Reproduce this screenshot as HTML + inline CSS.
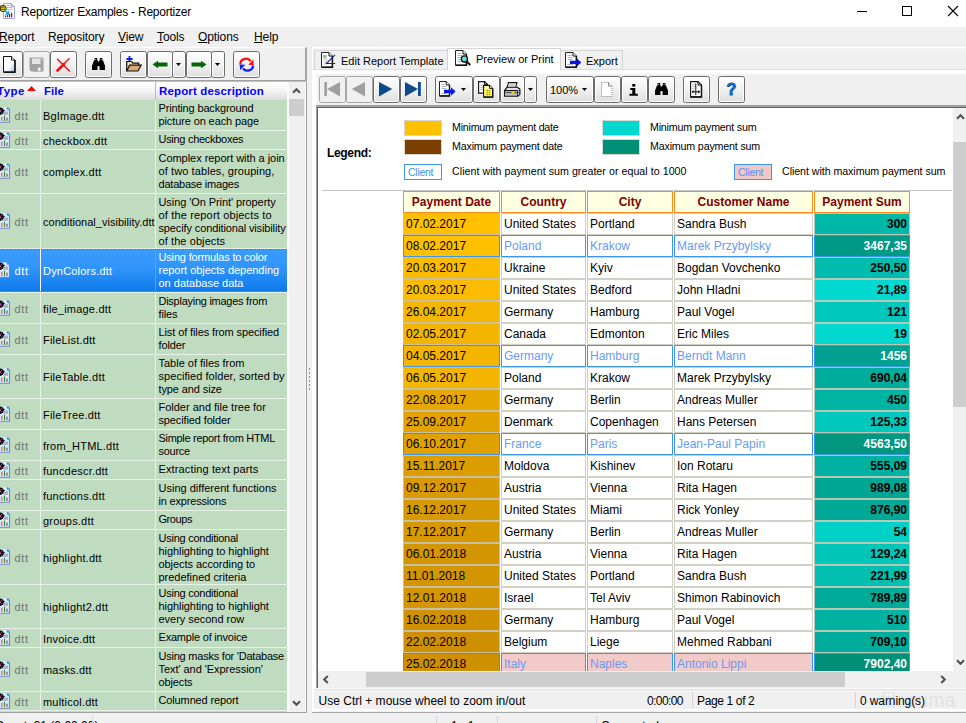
<!DOCTYPE html>
<html><head><meta charset="utf-8"><title>Reportizer Examples - Reportizer</title>
<style>
*{box-sizing:border-box;margin:0;padding:0}
html,body{width:966px;height:723px;overflow:hidden;background:#f0f0f0;font-family:"Liberation Sans",sans-serif;color:#000}
.abs{position:absolute}
#win{position:relative;width:966px;height:723px;overflow:hidden;background:#f0f0f0}
#title{position:absolute;left:0;top:0;width:966px;height:27px;background:#fff}
#title .t{position:absolute;left:21px;top:5px;font-size:12px;letter-spacing:-0.23px;line-height:15px;white-space:nowrap;color:#000}
#menu{position:absolute;left:0;top:27px;width:966px;height:20px;background:#f0f0f0}
#menu span{position:absolute;top:2px;font-size:12px;letter-spacing:-0.1px;line-height:16px;white-space:nowrap}
#menu u{text-decoration:underline;text-underline-offset:1px}
.tb{position:absolute;border:1px solid #6c6c6c;border-radius:2.500px;background:linear-gradient(#ffffff,#f2f2f2 45%,#dfdfdf);box-shadow:inset 0 0 0 1px #fcfcfc}
.dis{background:#f1f1f1;border-color:#a8a8a8;box-shadow:none}
.gtxt{font-size:11.3px;line-height:13px;white-space:nowrap}
#grid{position:absolute;left:0;top:82px;width:287px;height:630px;overflow:hidden;background:#e8f1e8}
.hd{position:absolute;top:0;height:18px;background:linear-gradient(#ffffff,#f4f4f4 50%,#dcdcdc);color:#0000ff;font-weight:bold;font-size:11.5px;line-height:18px;white-space:nowrap;border-right:1px solid #b8b8b8}
.c{position:absolute;background:#c0dcc0;overflow:hidden}
.c div{position:absolute;white-space:nowrap;font-size:11px;letter-spacing:-0.13px;line-height:13px}
.sel{background:linear-gradient(#3c9cfd,#3094fa 45%,#0c79ea)!important;color:#fff}
.rc{position:absolute;height:22px;font-size:12px;line-height:20px;white-space:nowrap;overflow:hidden;border:1px solid #d0d0c4}
.rh{position:absolute;top:191px;height:22px;background:#ffffe1;border:1px solid #ff8c1a;color:#800000;font-weight:bold;font-size:12px;line-height:20px;text-align:center;white-space:nowrap}
.w{background:#fff;border:1px solid #cfcfc4;box-shadow:0 0 0 1px #e4e4d8}
.st{position:absolute;font-size:11.6px;line-height:14px;white-space:nowrap}
</style></head><body><div id="win">

<div id="title"><div class="t">Reportizer Examples - Reportizer</div>
<svg class="abs" style="left:0;top:3px" width="16" height="16" viewBox="0 0 16 16"><path d="M3.500 0.500h8l3 3v12h-11z" fill="#fdfdff" stroke="#98a8d8"/><path d="M11.500 0.500v3h3" fill="#cfe0f8" stroke="#98a8d8"/><path d="M7 2.500h4M7 4.500h5.500M7 6.500h5.500" stroke="#b4b4bc" stroke-width=".9"/><ellipse cx="3" cy="5.500" rx="3.600" ry="3.400" fill="#4a3c00"/><path d="M1 4h4.500M1 5.700h4.500M1 7.300h4.500" stroke="#f0dc28" stroke-width="1"/><path d="M4.500 7l3.500 3.500" stroke="#1e96c8" stroke-width="1.600"/><path d="M9.300 7.500v4.300H5z" fill="#1e96c8"/><rect x="5" y="12.500" width="1.200" height="1.800" fill="#c00010"/><rect x="7" y="12" width="1.200" height="2.300" fill="#c00010"/><rect x="9" y="11" width="1.200" height="3.300" fill="#c00010"/><rect x="11" y="9.800" width="1.200" height="4.500" fill="#c00010"/></svg>
<svg class="abs" style="left:850px;top:0" width="116" height="27" viewBox="0 0 116 27"><path d="M7 11.500h10" stroke="#000" stroke-width="1"/><rect x="52.500" y="6.500" width="9" height="9" fill="none" stroke="#000" stroke-width="1"/><path d="M98 6l10 10M108 6L98 16" stroke="#000" stroke-width="1.100"/></svg>
</div>
<div id="menu">
<span style="left:-1px"><u>R</u>eport</span>
<span style="left:48px">R<u>e</u>pository</span>
<span style="left:118px"><u>V</u>iew</span>
<span style="left:157px"><u>T</u>ools</span>
<span style="left:198px"><u>O</u>ptions</span>
<span style="left:254px"><u>H</u>elp</span>
</div>
<div class="abs" style="left:0;top:47px;width:307px;height:34px;background:#f0f0f0;border-top:1px solid #fff;border-right:2px solid #a4a4a4;border-bottom:1px solid #a0a0a0"></div>
<div class="abs" style="left:0;top:81px;width:307px;height:1px;background:#c0c0c0"></div>
<div class="tb" style="left:-4px;top:51px;width:27px;height:27px"><svg class="abs" style="left:6px;top:4px" width="13" height="17" viewBox="0 0 13 17"><defs><linearGradient id="pg" x1="0" y1="0" x2="1" y2="1"><stop offset=".55" stop-color="#fff"/><stop offset="1" stop-color="#8fc0f0"/></linearGradient></defs><path d="M0.500 0.500h8l3.500 3.500v12h-11.500z" fill="url(#pg)" stroke="#111"/><path d="M8.500 0.500v3.500h3.500" fill="#fff" stroke="#111"/><path d="M12 4v12.200H0.500" fill="none" stroke="#111" stroke-width="1.400"/></svg></div>
<div class="tb dis" style="left:23px;top:51px;width:27px;height:27px"><svg class="abs" style="left:5px;top:5px" width="15" height="15" viewBox="0 0 15 15"><path d="M0.500 0.500h14v14H2L0.500 13z" fill="#a2a2a2"/><rect x="3" y="1.500" width="8.500" height="5.500" fill="#e4e4e4"/><rect x="4" y="9.500" width="8" height="5" fill="#a2a2a2"/><rect x="9" y="10.500" width="2.500" height="3.500" fill="#f4f4f4"/><rect x="12.300" y="1.500" width="1.200" height="1.200" fill="#e4e4e4"/></svg></div>
<div class="tb" style="left:50px;top:51px;width:27px;height:27px"><svg class="abs" style="left:5px;top:6px" width="15" height="14" viewBox="0 0 15 14"><path d="M1.500 1.200L13.500 13" stroke="#f41010" stroke-width="1.500" stroke-linecap="round"/><path d="M13 0.800L8 6" stroke="#f41010" stroke-width="1.400" stroke-linecap="round"/><path d="M8 6L1.500 12.500" stroke="#f41010" stroke-width="2.600" stroke-linecap="round"/></svg></div>
<div class="tb" style="left:85px;top:51px;width:27px;height:27px"><svg class="abs" style="left:6px;top:6px" width="13" height="12" viewBox="0 0 12 11"><path d="M2.400 0h2.400v2.200H2.400zM7.200 0h2.400v2.200H7.200zM1.800 2.200h3.600l.6 1.800V11H0V7zM6.600 2.200h3.600L12 7v4H6V4z" fill="#000"/><rect x="4.800" y="3.800" width="2.400" height="2.800" fill="#000"/><rect x="5" y="7.500" width="2" height="3.500" fill="#f0f0f0"/><rect x="3" y="0.800" width="0.800" height="0.800" fill="#fff"/><rect x="8" y="0.800" width="0.800" height="0.800" fill="#fff"/></svg></div>
<div class="tb" style="left:120px;top:51px;width:27px;height:27px"><svg class="abs" style="left:4px;top:3px" width="18" height="18" viewBox="0 0 18 18"><path d="M4.500 1v6M1.500 4h6" stroke="#0a1af0" stroke-width="1.800"/><path d="M1.700 15.800V6.500h4.800l1.200 1.600h6v2.400" fill="#f4dcb4" stroke="#111" stroke-width="1.200"/><path d="M1.700 16l3-5.800h11.500l-3.200 5.800z" fill="#dcaa78" stroke="#111" stroke-width="1.200"/></svg></div>
<div class="tb" style="left:147px;top:51px;width:26px;height:27px"><svg class="abs" style="left:4px;top:8px" width="16" height="9" viewBox="0 0 15 9"><path d="M0 4.500L5.500 0.800L5.500 2.500H15V6.500H5.500L5.500 8.200z" fill="#066406"/><path d="M0.500 4.500L5.500 1.500" stroke="#0a8a0a" stroke-width=".6"/></svg></div>
<div class="tb" style="left:172px;top:51px;width:14px;height:27px"><svg class="abs" style="left:3px;top:11px" width="5" height="3" viewBox="0 0 5 3"><path d="M0 0h5l-2.500 3z" fill="#000"/></svg></div>
<div class="tb" style="left:186px;top:51px;width:26px;height:27px"><svg class="abs" style="left:4px;top:8px" width="16" height="9" viewBox="0 0 15 9"><g transform="translate(15,0) scale(-1,1)"><path d="M0 4.500L5.500 0.800L5.500 2.500H15V6.500H5.500L5.500 8.200z" fill="#066406"/><path d="M0.500 4.500L5.500 1.500" stroke="#0a8a0a" stroke-width=".6"/></g></svg></div>
<div class="tb" style="left:211px;top:51px;width:14px;height:27px"><svg class="abs" style="left:3px;top:11px" width="5" height="3" viewBox="0 0 5 3"><path d="M0 0h5l-2.500 3z" fill="#000"/></svg></div>
<div class="tb" style="left:233px;top:51px;width:27px;height:27px"><svg class="abs" style="left:4px;top:4px" width="18" height="17" viewBox="0 0 18 17"><path d="M2.500 8.500A5.500 5 0 0 1 12.500 5" fill="none" stroke="#f41010" stroke-width="2.200"/><path d="M10.300 8.800L15.800 9.200L15.300 3.500z" fill="#f41010"/><path d="M15 9.500A5.500 5 0 0 1 5 12.500" fill="none" stroke="#1020f4" stroke-width="2.200"/><path d="M7.200 8.800L1.700 8.400L2.200 14.200z" fill="#1020f4"/></svg></div>
<div id="grid">
<div class="hd" style="left:0;width:41px"><span style="margin-left:-3px;letter-spacing:0.500px">Type</span><svg class="abs" style="left:27px;top:4px" width="9" height="5"><path d="M0 5L4.500 0L9 5z" fill="#f00"/></svg></div>
<div class="hd" style="left:40px;width:116px"><span style="margin-left:4px">File</span></div>
<div class="hd" style="left:156px;width:131px;border-right:none"><span style="margin-left:3px;letter-spacing:0.150px">Report description</span></div>
<div class="c" style="left:0;top:18px;width:40px;height:30px"><svg class="abs" style="left:0;top:7px" width="11" height="16" viewBox="0 0 11 16"><path d="M-1 0.500H7.500L9.500 2.500V15.200H-1z" fill="#dcebff"/><path d="M7.500 0.500L9.500 2.500V15.200H-1" fill="none" stroke="#7484c4" stroke-width="1.100"/><path d="M6.800 0.800h1.200l1 1v0.800H6.800z" fill="#1e90ff"/><rect x="3.300" y="4.400" width="4.700" height="3.400" fill="#aeb3bd"/><path d="M-1 0.800C1.500 0 3.200 1.500 3.400 2.600L5 3.200L3.600 4.600C3.600 6.500 2 8.300 -1 8z" fill="#000"/><circle cx="0.200" cy="4.200" r="0.900" fill="#ff50e0"/><circle cx="1.700" cy="2.600" r="0.500" fill="#9ab09a"/><circle cx="1.700" cy="5.800" r="0.500" fill="#9ab09a"/><rect x="0.900" y="9.600" width="1.700" height="4.200" fill="#ea7a8a"/><rect x="3.900" y="8.600" width="1.200" height="5.500" fill="#14a024"/><rect x="6.200" y="10.600" width="1.600" height="3.200" fill="#b462a4"/></svg><div style="left:14.500px;top:10px;color:#747474;letter-spacing:0.700px">dtt</div></div>
<div class="c" style="left:41px;top:18px;width:114px;height:30px"><div style="left:2px;top:10px;letter-spacing:0.2px">BgImage.dtt</div></div>
<div class="c" style="left:156px;top:18px;width:131px;height:30px"><div style="left:2.500px;top:2px;letter-spacing:-0.158px">Printing background</div><div style="left:2.500px;top:15px;letter-spacing:-0.113px">picture on each page</div></div>
<div class="c" style="left:0;top:49px;width:40px;height:18px"><svg class="abs" style="left:0;top:1px" width="11" height="16" viewBox="0 0 11 16"><path d="M-1 0.500H7.500L9.500 2.500V15.200H-1z" fill="#dcebff"/><path d="M7.500 0.500L9.500 2.500V15.200H-1" fill="none" stroke="#7484c4" stroke-width="1.100"/><path d="M6.800 0.800h1.200l1 1v0.800H6.800z" fill="#1e90ff"/><rect x="3.300" y="4.400" width="4.700" height="3.400" fill="#aeb3bd"/><path d="M-1 0.800C1.500 0 3.200 1.500 3.400 2.600L5 3.200L3.600 4.600C3.600 6.500 2 8.300 -1 8z" fill="#000"/><circle cx="0.200" cy="4.200" r="0.900" fill="#ff50e0"/><circle cx="1.700" cy="2.600" r="0.500" fill="#9ab09a"/><circle cx="1.700" cy="5.800" r="0.500" fill="#9ab09a"/><rect x="0.900" y="9.600" width="1.700" height="4.200" fill="#ea7a8a"/><rect x="3.900" y="8.600" width="1.200" height="5.500" fill="#14a024"/><rect x="6.200" y="10.600" width="1.600" height="3.200" fill="#b462a4"/></svg><div style="left:14.500px;top:4px;color:#747474;letter-spacing:0.700px">dtt</div></div>
<div class="c" style="left:41px;top:49px;width:114px;height:18px"><div style="left:2px;top:4px;letter-spacing:0.2px">checkbox.dtt</div></div>
<div class="c" style="left:156px;top:49px;width:131px;height:18px"><div style="left:2.500px;top:2px;letter-spacing:-0.285px">Using checkboxes</div></div>
<div class="c" style="left:0;top:68px;width:40px;height:43px"><svg class="abs" style="left:0;top:13px" width="11" height="16" viewBox="0 0 11 16"><path d="M-1 0.500H7.500L9.500 2.500V15.200H-1z" fill="#dcebff"/><path d="M7.500 0.500L9.500 2.500V15.200H-1" fill="none" stroke="#7484c4" stroke-width="1.100"/><path d="M6.800 0.800h1.200l1 1v0.800H6.800z" fill="#1e90ff"/><rect x="3.300" y="4.400" width="4.700" height="3.400" fill="#aeb3bd"/><path d="M-1 0.800C1.500 0 3.200 1.500 3.400 2.600L5 3.200L3.600 4.600C3.600 6.500 2 8.300 -1 8z" fill="#000"/><circle cx="0.200" cy="4.200" r="0.900" fill="#ff50e0"/><circle cx="1.700" cy="2.600" r="0.500" fill="#9ab09a"/><circle cx="1.700" cy="5.800" r="0.500" fill="#9ab09a"/><rect x="0.900" y="9.600" width="1.700" height="4.200" fill="#ea7a8a"/><rect x="3.900" y="8.600" width="1.200" height="5.500" fill="#14a024"/><rect x="6.200" y="10.600" width="1.600" height="3.200" fill="#b462a4"/></svg><div style="left:14.500px;top:16px;color:#747474;letter-spacing:0.700px">dtt</div></div>
<div class="c" style="left:41px;top:68px;width:114px;height:43px"><div style="left:2px;top:16px;letter-spacing:0.2px">complex.dtt</div></div>
<div class="c" style="left:156px;top:68px;width:131px;height:43px"><div style="left:2.500px;top:2px;letter-spacing:-0.039px">Complex report with a join</div><div style="left:2.500px;top:15px;letter-spacing:0.093px">of two tables, grouping,</div><div style="left:2.500px;top:28px;letter-spacing:-0.22px">database images</div></div>
<div class="c" style="left:0;top:112px;width:40px;height:54px"><svg class="abs" style="left:0;top:19px" width="11" height="16" viewBox="0 0 11 16"><path d="M-1 0.500H7.500L9.500 2.500V15.200H-1z" fill="#dcebff"/><path d="M7.500 0.500L9.500 2.500V15.200H-1" fill="none" stroke="#7484c4" stroke-width="1.100"/><path d="M6.800 0.800h1.200l1 1v0.800H6.800z" fill="#1e90ff"/><rect x="3.300" y="4.400" width="4.700" height="3.400" fill="#aeb3bd"/><path d="M-1 0.800C1.500 0 3.200 1.500 3.400 2.600L5 3.200L3.600 4.600C3.600 6.500 2 8.300 -1 8z" fill="#000"/><circle cx="0.200" cy="4.200" r="0.900" fill="#ff50e0"/><circle cx="1.700" cy="2.600" r="0.500" fill="#9ab09a"/><circle cx="1.700" cy="5.800" r="0.500" fill="#9ab09a"/><rect x="0.900" y="9.600" width="1.700" height="4.200" fill="#ea7a8a"/><rect x="3.900" y="8.600" width="1.200" height="5.500" fill="#14a024"/><rect x="6.200" y="10.600" width="1.600" height="3.200" fill="#b462a4"/></svg><div style="left:14.500px;top:22px;color:#747474;letter-spacing:0.700px">dtt</div></div>
<div class="c" style="left:41px;top:112px;width:114px;height:54px"><div style="left:2px;top:22px;letter-spacing:0.02px">conditional_visibility.dtt</div></div>
<div class="c" style="left:156px;top:112px;width:131px;height:54px"><div style="left:2.500px;top:2px;letter-spacing:-0.081px">Using 'On Print' property</div><div style="left:2.500px;top:15px;letter-spacing:0.163px">of the report objects to</div><div style="left:2.500px;top:28px;letter-spacing:-0.126px">specify conditional visibility</div><div style="left:2.500px;top:41px;letter-spacing:0.089px">of the objects</div></div>
<div class="c sel" style="left:0;top:167px;width:40px;height:43px"><svg class="abs" style="left:0;top:13px" width="11" height="16" viewBox="0 0 11 16"><path d="M-1 0.500H7.500L9.500 2.500V15.200H-1z" fill="#dcebff"/><path d="M7.500 0.500L9.500 2.500V15.200H-1" fill="none" stroke="#7484c4" stroke-width="1.100"/><path d="M6.800 0.800h1.200l1 1v0.800H6.800z" fill="#1e90ff"/><rect x="3.300" y="4.400" width="4.700" height="3.400" fill="#aeb3bd"/><path d="M-1 0.800C1.500 0 3.200 1.500 3.400 2.600L5 3.200L3.600 4.600C3.600 6.500 2 8.300 -1 8z" fill="#000"/><circle cx="0.200" cy="4.200" r="0.900" fill="#ff50e0"/><circle cx="1.700" cy="2.600" r="0.500" fill="#9ab09a"/><circle cx="1.700" cy="5.800" r="0.500" fill="#9ab09a"/><rect x="0.900" y="9.600" width="1.700" height="4.200" fill="#ea7a8a"/><rect x="3.900" y="8.600" width="1.200" height="5.500" fill="#14a024"/><rect x="6.200" y="10.600" width="1.600" height="3.200" fill="#b462a4"/></svg><div style="left:14.500px;top:16px;color:#fff;letter-spacing:0.700px">dtt</div></div>
<div class="c sel" style="left:41px;top:167px;width:114px;height:43px"><div style="left:2px;top:16px;letter-spacing:0.2px">DynColors.dtt</div></div>
<div class="c sel" style="left:156px;top:167px;width:131px;height:43px"><div style="left:2.500px;top:2px;letter-spacing:-0.168px">Using formulas to color</div><div style="left:2.500px;top:15px;letter-spacing:-0.021px">report objects depending</div><div style="left:2.500px;top:28px;letter-spacing:-0.002px">on database data</div></div>
<div class="abs" style="left:0;top:167px;width:287px;height:1px;background:repeating-linear-gradient(90deg,#d88a3c 0 1px,#2a6fc0 1px 2px)"></div>
<div class="abs" style="left:0;top:209px;width:287px;height:1px;background:repeating-linear-gradient(90deg,#d88a3c 0 1px,#2a6fc0 1px 2px)"></div>
<div class="abs" style="left:40px;top:167px;width:1px;height:42px;background:#fff"></div>
<div class="abs" style="left:155px;top:168px;width:1px;height:41px;background:#4ea4fb"></div>
<div class="c" style="left:0;top:211px;width:40px;height:30px"><svg class="abs" style="left:0;top:7px" width="11" height="16" viewBox="0 0 11 16"><path d="M-1 0.500H7.500L9.500 2.500V15.200H-1z" fill="#dcebff"/><path d="M7.500 0.500L9.500 2.500V15.200H-1" fill="none" stroke="#7484c4" stroke-width="1.100"/><path d="M6.800 0.800h1.200l1 1v0.800H6.800z" fill="#1e90ff"/><rect x="3.300" y="4.400" width="4.700" height="3.400" fill="#aeb3bd"/><path d="M-1 0.800C1.500 0 3.200 1.500 3.400 2.600L5 3.200L3.600 4.600C3.600 6.500 2 8.300 -1 8z" fill="#000"/><circle cx="0.200" cy="4.200" r="0.900" fill="#ff50e0"/><circle cx="1.700" cy="2.600" r="0.500" fill="#9ab09a"/><circle cx="1.700" cy="5.800" r="0.500" fill="#9ab09a"/><rect x="0.900" y="9.600" width="1.700" height="4.200" fill="#ea7a8a"/><rect x="3.900" y="8.600" width="1.200" height="5.500" fill="#14a024"/><rect x="6.200" y="10.600" width="1.600" height="3.200" fill="#b462a4"/></svg><div style="left:14.500px;top:10px;color:#747474;letter-spacing:0.700px">dtt</div></div>
<div class="c" style="left:41px;top:211px;width:114px;height:30px"><div style="left:2px;top:10px;letter-spacing:0.2px">file_image.dtt</div></div>
<div class="c" style="left:156px;top:211px;width:131px;height:30px"><div style="left:2.500px;top:2px;letter-spacing:-0.263px">Displaying images from</div><div style="left:2.500px;top:15px;letter-spacing:-0.166px">files</div></div>
<div class="c" style="left:0;top:242px;width:40px;height:30px"><svg class="abs" style="left:0;top:7px" width="11" height="16" viewBox="0 0 11 16"><path d="M-1 0.500H7.500L9.500 2.500V15.200H-1z" fill="#dcebff"/><path d="M7.500 0.500L9.500 2.500V15.200H-1" fill="none" stroke="#7484c4" stroke-width="1.100"/><path d="M6.800 0.800h1.200l1 1v0.800H6.800z" fill="#1e90ff"/><rect x="3.300" y="4.400" width="4.700" height="3.400" fill="#aeb3bd"/><path d="M-1 0.800C1.500 0 3.200 1.500 3.400 2.600L5 3.200L3.600 4.600C3.600 6.500 2 8.300 -1 8z" fill="#000"/><circle cx="0.200" cy="4.200" r="0.900" fill="#ff50e0"/><circle cx="1.700" cy="2.600" r="0.500" fill="#9ab09a"/><circle cx="1.700" cy="5.800" r="0.500" fill="#9ab09a"/><rect x="0.900" y="9.600" width="1.700" height="4.200" fill="#ea7a8a"/><rect x="3.900" y="8.600" width="1.200" height="5.500" fill="#14a024"/><rect x="6.200" y="10.600" width="1.600" height="3.200" fill="#b462a4"/></svg><div style="left:14.500px;top:10px;color:#747474;letter-spacing:0.700px">dtt</div></div>
<div class="c" style="left:41px;top:242px;width:114px;height:30px"><div style="left:2px;top:10px;letter-spacing:0.2px">FileList.dtt</div></div>
<div class="c" style="left:156px;top:242px;width:131px;height:30px"><div style="left:2.500px;top:2px;letter-spacing:-0.107px">List of files from specified</div><div style="left:2.500px;top:15px;letter-spacing:-0.13px">folder</div></div>
<div class="c" style="left:0;top:273px;width:40px;height:43px"><svg class="abs" style="left:0;top:13px" width="11" height="16" viewBox="0 0 11 16"><path d="M-1 0.500H7.500L9.500 2.500V15.200H-1z" fill="#dcebff"/><path d="M7.500 0.500L9.500 2.500V15.200H-1" fill="none" stroke="#7484c4" stroke-width="1.100"/><path d="M6.800 0.800h1.200l1 1v0.800H6.800z" fill="#1e90ff"/><rect x="3.300" y="4.400" width="4.700" height="3.400" fill="#aeb3bd"/><path d="M-1 0.800C1.500 0 3.200 1.500 3.400 2.600L5 3.200L3.600 4.600C3.600 6.500 2 8.300 -1 8z" fill="#000"/><circle cx="0.200" cy="4.200" r="0.900" fill="#ff50e0"/><circle cx="1.700" cy="2.600" r="0.500" fill="#9ab09a"/><circle cx="1.700" cy="5.800" r="0.500" fill="#9ab09a"/><rect x="0.900" y="9.600" width="1.700" height="4.200" fill="#ea7a8a"/><rect x="3.900" y="8.600" width="1.200" height="5.500" fill="#14a024"/><rect x="6.200" y="10.600" width="1.600" height="3.200" fill="#b462a4"/></svg><div style="left:14.500px;top:16px;color:#747474;letter-spacing:0.700px">dtt</div></div>
<div class="c" style="left:41px;top:273px;width:114px;height:43px"><div style="left:2px;top:16px;letter-spacing:0.2px">FileTable.dtt</div></div>
<div class="c" style="left:156px;top:273px;width:131px;height:43px"><div style="left:2.500px;top:2px;letter-spacing:-0.011px">Table of files from</div><div style="left:2.500px;top:15px;letter-spacing:0.052px">specified folder, sorted by</div><div style="left:2.500px;top:28px;letter-spacing:-0.111px">type and size</div></div>
<div class="c" style="left:0;top:317px;width:40px;height:30px"><svg class="abs" style="left:0;top:7px" width="11" height="16" viewBox="0 0 11 16"><path d="M-1 0.500H7.500L9.500 2.500V15.200H-1z" fill="#dcebff"/><path d="M7.500 0.500L9.500 2.500V15.200H-1" fill="none" stroke="#7484c4" stroke-width="1.100"/><path d="M6.800 0.800h1.200l1 1v0.800H6.800z" fill="#1e90ff"/><rect x="3.300" y="4.400" width="4.700" height="3.400" fill="#aeb3bd"/><path d="M-1 0.800C1.500 0 3.200 1.500 3.400 2.600L5 3.200L3.600 4.600C3.600 6.500 2 8.300 -1 8z" fill="#000"/><circle cx="0.200" cy="4.200" r="0.900" fill="#ff50e0"/><circle cx="1.700" cy="2.600" r="0.500" fill="#9ab09a"/><circle cx="1.700" cy="5.800" r="0.500" fill="#9ab09a"/><rect x="0.900" y="9.600" width="1.700" height="4.200" fill="#ea7a8a"/><rect x="3.900" y="8.600" width="1.200" height="5.500" fill="#14a024"/><rect x="6.200" y="10.600" width="1.600" height="3.200" fill="#b462a4"/></svg><div style="left:14.500px;top:10px;color:#747474;letter-spacing:0.700px">dtt</div></div>
<div class="c" style="left:41px;top:317px;width:114px;height:30px"><div style="left:2px;top:10px;letter-spacing:0.2px">FileTree.dtt</div></div>
<div class="c" style="left:156px;top:317px;width:131px;height:30px"><div style="left:2.500px;top:2px;letter-spacing:-0.01px">Folder and file tree for</div><div style="left:2.500px;top:15px;letter-spacing:-0.127px">specified folder</div></div>
<div class="c" style="left:0;top:348px;width:40px;height:30px"><svg class="abs" style="left:0;top:7px" width="11" height="16" viewBox="0 0 11 16"><path d="M-1 0.500H7.500L9.500 2.500V15.200H-1z" fill="#dcebff"/><path d="M7.500 0.500L9.500 2.500V15.200H-1" fill="none" stroke="#7484c4" stroke-width="1.100"/><path d="M6.800 0.800h1.200l1 1v0.800H6.800z" fill="#1e90ff"/><rect x="3.300" y="4.400" width="4.700" height="3.400" fill="#aeb3bd"/><path d="M-1 0.800C1.500 0 3.200 1.500 3.400 2.600L5 3.200L3.600 4.600C3.600 6.500 2 8.300 -1 8z" fill="#000"/><circle cx="0.200" cy="4.200" r="0.900" fill="#ff50e0"/><circle cx="1.700" cy="2.600" r="0.500" fill="#9ab09a"/><circle cx="1.700" cy="5.800" r="0.500" fill="#9ab09a"/><rect x="0.900" y="9.600" width="1.700" height="4.200" fill="#ea7a8a"/><rect x="3.900" y="8.600" width="1.200" height="5.500" fill="#14a024"/><rect x="6.200" y="10.600" width="1.600" height="3.200" fill="#b462a4"/></svg><div style="left:14.500px;top:10px;color:#747474;letter-spacing:0.700px">dtt</div></div>
<div class="c" style="left:41px;top:348px;width:114px;height:30px"><div style="left:2px;top:10px;letter-spacing:0.2px">from_HTML.dtt</div></div>
<div class="c" style="left:156px;top:348px;width:131px;height:30px"><div style="left:2.500px;top:2px;letter-spacing:-0.304px">Simple report from HTML</div><div style="left:2.500px;top:15px;letter-spacing:-0.266px">source</div></div>
<div class="c" style="left:0;top:379px;width:40px;height:18px"><svg class="abs" style="left:0;top:1px" width="11" height="16" viewBox="0 0 11 16"><path d="M-1 0.500H7.500L9.500 2.500V15.200H-1z" fill="#dcebff"/><path d="M7.500 0.500L9.500 2.500V15.200H-1" fill="none" stroke="#7484c4" stroke-width="1.100"/><path d="M6.800 0.800h1.200l1 1v0.800H6.800z" fill="#1e90ff"/><rect x="3.300" y="4.400" width="4.700" height="3.400" fill="#aeb3bd"/><path d="M-1 0.800C1.500 0 3.200 1.500 3.400 2.600L5 3.200L3.600 4.600C3.600 6.500 2 8.300 -1 8z" fill="#000"/><circle cx="0.200" cy="4.200" r="0.900" fill="#ff50e0"/><circle cx="1.700" cy="2.600" r="0.500" fill="#9ab09a"/><circle cx="1.700" cy="5.800" r="0.500" fill="#9ab09a"/><rect x="0.900" y="9.600" width="1.700" height="4.200" fill="#ea7a8a"/><rect x="3.900" y="8.600" width="1.200" height="5.500" fill="#14a024"/><rect x="6.200" y="10.600" width="1.600" height="3.200" fill="#b462a4"/></svg><div style="left:14.500px;top:4px;color:#747474;letter-spacing:0.700px">dtt</div></div>
<div class="c" style="left:41px;top:379px;width:114px;height:18px"><div style="left:2px;top:4px;letter-spacing:0.2px">funcdescr.dtt</div></div>
<div class="c" style="left:156px;top:379px;width:131px;height:18px"><div style="left:2.500px;top:2px;letter-spacing:0.129px">Extracting text parts</div></div>
<div class="c" style="left:0;top:398px;width:40px;height:30px"><svg class="abs" style="left:0;top:7px" width="11" height="16" viewBox="0 0 11 16"><path d="M-1 0.500H7.500L9.500 2.500V15.200H-1z" fill="#dcebff"/><path d="M7.500 0.500L9.500 2.500V15.200H-1" fill="none" stroke="#7484c4" stroke-width="1.100"/><path d="M6.800 0.800h1.200l1 1v0.800H6.800z" fill="#1e90ff"/><rect x="3.300" y="4.400" width="4.700" height="3.400" fill="#aeb3bd"/><path d="M-1 0.800C1.500 0 3.200 1.500 3.400 2.600L5 3.200L3.600 4.600C3.600 6.500 2 8.300 -1 8z" fill="#000"/><circle cx="0.200" cy="4.200" r="0.900" fill="#ff50e0"/><circle cx="1.700" cy="2.600" r="0.500" fill="#9ab09a"/><circle cx="1.700" cy="5.800" r="0.500" fill="#9ab09a"/><rect x="0.900" y="9.600" width="1.700" height="4.200" fill="#ea7a8a"/><rect x="3.900" y="8.600" width="1.200" height="5.500" fill="#14a024"/><rect x="6.200" y="10.600" width="1.600" height="3.200" fill="#b462a4"/></svg><div style="left:14.500px;top:10px;color:#747474;letter-spacing:0.700px">dtt</div></div>
<div class="c" style="left:41px;top:398px;width:114px;height:30px"><div style="left:2px;top:10px;letter-spacing:0.2px">functions.dtt</div></div>
<div class="c" style="left:156px;top:398px;width:131px;height:30px"><div style="left:2.500px;top:2px;letter-spacing:0.008px">Using different functions</div><div style="left:2.500px;top:15px;letter-spacing:-0.187px">in expressions</div></div>
<div class="c" style="left:0;top:429px;width:40px;height:18px"><svg class="abs" style="left:0;top:1px" width="11" height="16" viewBox="0 0 11 16"><path d="M-1 0.500H7.500L9.500 2.500V15.200H-1z" fill="#dcebff"/><path d="M7.500 0.500L9.500 2.500V15.200H-1" fill="none" stroke="#7484c4" stroke-width="1.100"/><path d="M6.800 0.800h1.200l1 1v0.800H6.800z" fill="#1e90ff"/><rect x="3.300" y="4.400" width="4.700" height="3.400" fill="#aeb3bd"/><path d="M-1 0.800C1.500 0 3.200 1.500 3.400 2.600L5 3.200L3.600 4.600C3.600 6.500 2 8.300 -1 8z" fill="#000"/><circle cx="0.200" cy="4.200" r="0.900" fill="#ff50e0"/><circle cx="1.700" cy="2.600" r="0.500" fill="#9ab09a"/><circle cx="1.700" cy="5.800" r="0.500" fill="#9ab09a"/><rect x="0.900" y="9.600" width="1.700" height="4.200" fill="#ea7a8a"/><rect x="3.900" y="8.600" width="1.200" height="5.500" fill="#14a024"/><rect x="6.200" y="10.600" width="1.600" height="3.200" fill="#b462a4"/></svg><div style="left:14.500px;top:4px;color:#747474;letter-spacing:0.700px">dtt</div></div>
<div class="c" style="left:41px;top:429px;width:114px;height:18px"><div style="left:2px;top:4px;letter-spacing:0.2px">groups.dtt</div></div>
<div class="c" style="left:156px;top:429px;width:131px;height:18px"><div style="left:2.500px;top:2px;letter-spacing:-0.436px">Groups</div></div>
<div class="c" style="left:0;top:448px;width:40px;height:54px"><svg class="abs" style="left:0;top:19px" width="11" height="16" viewBox="0 0 11 16"><path d="M-1 0.500H7.500L9.500 2.500V15.200H-1z" fill="#dcebff"/><path d="M7.500 0.500L9.500 2.500V15.200H-1" fill="none" stroke="#7484c4" stroke-width="1.100"/><path d="M6.800 0.800h1.200l1 1v0.800H6.800z" fill="#1e90ff"/><rect x="3.300" y="4.400" width="4.700" height="3.400" fill="#aeb3bd"/><path d="M-1 0.800C1.500 0 3.200 1.500 3.400 2.600L5 3.200L3.600 4.600C3.600 6.500 2 8.300 -1 8z" fill="#000"/><circle cx="0.200" cy="4.200" r="0.900" fill="#ff50e0"/><circle cx="1.700" cy="2.600" r="0.500" fill="#9ab09a"/><circle cx="1.700" cy="5.800" r="0.500" fill="#9ab09a"/><rect x="0.900" y="9.600" width="1.700" height="4.200" fill="#ea7a8a"/><rect x="3.900" y="8.600" width="1.200" height="5.500" fill="#14a024"/><rect x="6.200" y="10.600" width="1.600" height="3.200" fill="#b462a4"/></svg><div style="left:14.500px;top:22px;color:#747474;letter-spacing:0.700px">dtt</div></div>
<div class="c" style="left:41px;top:448px;width:114px;height:54px"><div style="left:2px;top:22px;letter-spacing:0.2px">highlight.dtt</div></div>
<div class="c" style="left:156px;top:448px;width:131px;height:54px"><div style="left:2.500px;top:2px;letter-spacing:-0.249px">Using conditional</div><div style="left:2.500px;top:15px;letter-spacing:-0.068px">highlighting to highlight</div><div style="left:2.500px;top:28px;letter-spacing:-0.065px">objects according to</div><div style="left:2.500px;top:41px;letter-spacing:-0.015px">predefined criteria</div></div>
<div class="c" style="left:0;top:503px;width:40px;height:43px"><svg class="abs" style="left:0;top:13px" width="11" height="16" viewBox="0 0 11 16"><path d="M-1 0.500H7.500L9.500 2.500V15.200H-1z" fill="#dcebff"/><path d="M7.500 0.500L9.500 2.500V15.200H-1" fill="none" stroke="#7484c4" stroke-width="1.100"/><path d="M6.800 0.800h1.200l1 1v0.800H6.800z" fill="#1e90ff"/><rect x="3.300" y="4.400" width="4.700" height="3.400" fill="#aeb3bd"/><path d="M-1 0.800C1.500 0 3.200 1.500 3.400 2.600L5 3.200L3.600 4.600C3.600 6.500 2 8.300 -1 8z" fill="#000"/><circle cx="0.200" cy="4.200" r="0.900" fill="#ff50e0"/><circle cx="1.700" cy="2.600" r="0.500" fill="#9ab09a"/><circle cx="1.700" cy="5.800" r="0.500" fill="#9ab09a"/><rect x="0.900" y="9.600" width="1.700" height="4.200" fill="#ea7a8a"/><rect x="3.900" y="8.600" width="1.200" height="5.500" fill="#14a024"/><rect x="6.200" y="10.600" width="1.600" height="3.200" fill="#b462a4"/></svg><div style="left:14.500px;top:16px;color:#747474;letter-spacing:0.700px">dtt</div></div>
<div class="c" style="left:41px;top:503px;width:114px;height:43px"><div style="left:2px;top:16px;letter-spacing:0.2px">highlight2.dtt</div></div>
<div class="c" style="left:156px;top:503px;width:131px;height:43px"><div style="left:2.500px;top:2px;letter-spacing:-0.249px">Using conditional</div><div style="left:2.500px;top:15px;letter-spacing:-0.068px">highlighting to highlight</div><div style="left:2.500px;top:28px;letter-spacing:-0.035px">every second row</div></div>
<div class="c" style="left:0;top:547px;width:40px;height:18px"><svg class="abs" style="left:0;top:1px" width="11" height="16" viewBox="0 0 11 16"><path d="M-1 0.500H7.500L9.500 2.500V15.200H-1z" fill="#dcebff"/><path d="M7.500 0.500L9.500 2.500V15.200H-1" fill="none" stroke="#7484c4" stroke-width="1.100"/><path d="M6.800 0.800h1.200l1 1v0.800H6.800z" fill="#1e90ff"/><rect x="3.300" y="4.400" width="4.700" height="3.400" fill="#aeb3bd"/><path d="M-1 0.800C1.500 0 3.200 1.500 3.400 2.600L5 3.200L3.600 4.600C3.600 6.500 2 8.300 -1 8z" fill="#000"/><circle cx="0.200" cy="4.200" r="0.900" fill="#ff50e0"/><circle cx="1.700" cy="2.600" r="0.500" fill="#9ab09a"/><circle cx="1.700" cy="5.800" r="0.500" fill="#9ab09a"/><rect x="0.900" y="9.600" width="1.700" height="4.200" fill="#ea7a8a"/><rect x="3.900" y="8.600" width="1.200" height="5.500" fill="#14a024"/><rect x="6.200" y="10.600" width="1.600" height="3.200" fill="#b462a4"/></svg><div style="left:14.500px;top:4px;color:#747474;letter-spacing:0.700px">dtt</div></div>
<div class="c" style="left:41px;top:547px;width:114px;height:18px"><div style="left:2px;top:4px;letter-spacing:0.2px">Invoice.dtt</div></div>
<div class="c" style="left:156px;top:547px;width:131px;height:18px"><div style="left:2.500px;top:2px;letter-spacing:-0.202px">Example of invoice</div></div>
<div class="c" style="left:0;top:566px;width:40px;height:43px"><svg class="abs" style="left:0;top:13px" width="11" height="16" viewBox="0 0 11 16"><path d="M-1 0.500H7.500L9.500 2.500V15.200H-1z" fill="#dcebff"/><path d="M7.500 0.500L9.500 2.500V15.200H-1" fill="none" stroke="#7484c4" stroke-width="1.100"/><path d="M6.800 0.800h1.200l1 1v0.800H6.800z" fill="#1e90ff"/><rect x="3.300" y="4.400" width="4.700" height="3.400" fill="#aeb3bd"/><path d="M-1 0.800C1.500 0 3.200 1.500 3.400 2.600L5 3.200L3.600 4.600C3.600 6.500 2 8.300 -1 8z" fill="#000"/><circle cx="0.200" cy="4.200" r="0.900" fill="#ff50e0"/><circle cx="1.700" cy="2.600" r="0.500" fill="#9ab09a"/><circle cx="1.700" cy="5.800" r="0.500" fill="#9ab09a"/><rect x="0.900" y="9.600" width="1.700" height="4.200" fill="#ea7a8a"/><rect x="3.900" y="8.600" width="1.200" height="5.500" fill="#14a024"/><rect x="6.200" y="10.600" width="1.600" height="3.200" fill="#b462a4"/></svg><div style="left:14.500px;top:16px;color:#747474;letter-spacing:0.700px">dtt</div></div>
<div class="c" style="left:41px;top:566px;width:114px;height:43px"><div style="left:2px;top:16px;letter-spacing:0.2px">masks.dtt</div></div>
<div class="c" style="left:156px;top:566px;width:131px;height:43px"><div style="left:2.500px;top:2px;letter-spacing:-0.225px">Using masks for 'Database</div><div style="left:2.500px;top:15px;letter-spacing:-0.05px">Text' and 'Expression'</div><div style="left:2.500px;top:28px;letter-spacing:-0.13px">objects</div></div>
<div class="c" style="left:0;top:610px;width:40px;height:18px"><svg class="abs" style="left:0;top:1px" width="11" height="16" viewBox="0 0 11 16"><path d="M-1 0.500H7.500L9.500 2.500V15.200H-1z" fill="#dcebff"/><path d="M7.500 0.500L9.500 2.500V15.200H-1" fill="none" stroke="#7484c4" stroke-width="1.100"/><path d="M6.800 0.800h1.200l1 1v0.800H6.800z" fill="#1e90ff"/><rect x="3.300" y="4.400" width="4.700" height="3.400" fill="#aeb3bd"/><path d="M-1 0.800C1.500 0 3.200 1.500 3.400 2.600L5 3.200L3.600 4.600C3.600 6.500 2 8.300 -1 8z" fill="#000"/><circle cx="0.200" cy="4.200" r="0.900" fill="#ff50e0"/><circle cx="1.700" cy="2.600" r="0.500" fill="#9ab09a"/><circle cx="1.700" cy="5.800" r="0.500" fill="#9ab09a"/><rect x="0.900" y="9.600" width="1.700" height="4.200" fill="#ea7a8a"/><rect x="3.900" y="8.600" width="1.200" height="5.500" fill="#14a024"/><rect x="6.200" y="10.600" width="1.600" height="3.200" fill="#b462a4"/></svg><div style="left:14.500px;top:4px;color:#747474;letter-spacing:0.700px">dtt</div></div>
<div class="c" style="left:41px;top:610px;width:114px;height:18px"><div style="left:2px;top:4px;letter-spacing:0.2px">multicol.dtt</div></div>
<div class="c" style="left:156px;top:610px;width:131px;height:18px"><div style="left:2.500px;top:2px;letter-spacing:-0.131px">Columned report</div></div>
</div>
<div class="abs" style="left:287px;top:82px;width:18px;height:630px;background:#f0f0f0;border-left:2px solid #fbfbfb"></div>
<div class="abs" style="left:289px;top:99px;width:15px;height:17px;background:#cdcdcd"></div>
<svg class="abs" style="left:292px;top:87px" width="9" height="7" viewBox="0 0 9 7"><path d="M1 5.800L4.500 2.200L8 5.800" fill="none" stroke="#505050" stroke-width="2"/></svg>
<svg class="abs" style="left:292px;top:700px" width="9" height="7" viewBox="0 0 9 7"><path d="M1 1.200L4.500 4.800L8 1.200" fill="none" stroke="#505050" stroke-width="2"/></svg>
<div class="abs" style="left:0;top:711px;width:287px;height:1px;background:#c0dcc0"></div>
<div class="abs" style="left:0;top:712px;width:307px;height:1px;background:#a0a0a0"></div>
<div class="abs" style="left:305px;top:82px;width:1px;height:630px;background:#fafafa"></div>
<div class="abs" style="left:306px;top:82px;width:1px;height:631px;background:#a0a0a0"></div>
<div class="abs" style="left:308.500px;top:368px;width:1.500px;height:23px;background:repeating-linear-gradient(#959595 0 1.600px,transparent 1.600px 4px)"></div>
<div class="abs" style="left:0;top:713px;width:966px;height:10px;background:#f0f0f0"></div>
<div class="st" style="left:-5px;top:719px;font-size:12px">Count: 31 (0:00:00)</div>
<div class="st" style="left:451px;top:719px;font-size:12px">1 : 1</div>
<div class="st" style="left:601px;top:719px;font-size:12px">Connected</div>
<div class="abs" style="left:92px;top:716px;width:1px;height:8px;background:#d4d4d4"></div>
<div class="abs" style="left:436px;top:716px;width:1px;height:8px;background:#d4d4d4"></div>
<div class="abs" style="left:497px;top:716px;width:1px;height:8px;background:#d4d4d4"></div>
<div class="abs" style="left:596px;top:716px;width:1px;height:8px;background:#d4d4d4"></div>
<div class="abs" style="left:312px;top:47px;width:654px;height:3px;background:linear-gradient(#fdfdfd 0 45%,#f4f4f4 45% 100%)"></div>
<div class="abs" style="left:312px;top:69px;width:660px;height:644px;border-top:1px solid #dcdcdc;background:#fff"></div>
<div class="abs" style="left:312px;top:47px;width:1px;height:23px;background:#fff"></div>
<div class="abs" style="left:314px;top:50px;width:134px;height:20px;border:1px solid #d4d4d4;border-bottom:1px solid #dcdcdc;background:#f0f0f0"></div>
<div class="abs" style="left:560px;top:50px;width:63px;height:20px;border:1px solid #d4d4d4;border-left:none;border-bottom:1px solid #dcdcdc;background:#f0f0f0"></div>
<div class="abs" style="left:447px;top:48px;width:114px;height:22px;border:1px solid #d4d4d4;border-bottom:none;background:#fff"></div>
<div class="st" style="left:341px;top:54px;font-size:11px">Edit Report Template</div>
<div class="st" style="left:476px;top:52px;font-size:11px">Preview or Print</div>
<div class="st" style="left:586px;top:54px;font-size:11px">Export</div>
<svg class="abs" style="left:321px;top:52px" width="15" height="16" viewBox="0 0 15 16"><path d="M0.500 0.500h7.500l3.400 3.400v11.300H0.500z" fill="#fff" stroke="#222" stroke-width="1"/><path d="M8 0.600v3.400h3.400" fill="#fff" stroke="#111" stroke-width="1"/><path d="M0.600 15.300h10.800V4" fill="none" stroke="#111" stroke-width="1.500"/><rect x="2.200" y="3" width="3.400" height="3.400" fill="#d8a060"/><rect x="3.200" y="3.800" width="1.600" height="1.600" fill="#30e0e8"/><path d="M2.500 8h5M2.500 10h4M2.500 12h3" stroke="#b8b8b8" stroke-width=".9"/><path d="M14 2.800L5.500 11.500H14.200" fill="none" stroke="#1818c0" stroke-width="1.100"/></svg>
<svg class="abs" style="left:455px;top:50px" width="17" height="17" viewBox="0 0 17 17"><path d="M0.500 0.500h7.500l3.400 3.400v11.300H0.500z" fill="#fff" stroke="#222" stroke-width="1"/><path d="M8 0.600v3.400h3.400" fill="#fff" stroke="#111" stroke-width="1"/><path d="M0.600 15.300h10.800V4" fill="none" stroke="#111" stroke-width="1.500"/><path d="M2.500 3.500h4M2.500 5.500h5M2.500 7.500h3.500M2.500 9.500h3M2.500 11.500h3.500" stroke="#b0b0b0" stroke-width=".9"/><circle cx="9.400" cy="8.900" r="3.100" fill="#58e4e4" stroke="#111" stroke-width="1.300"/><path d="M11.800 11.500l3.400 3.500" stroke="#111" stroke-width="2"/></svg>
<svg class="abs" style="left:565px;top:52px" width="17" height="16" viewBox="0 0 17 16"><path d="M0.500 0.500h7.500l3.400 3.400v11.300H0.500z" fill="#fff" stroke="#222" stroke-width="1"/><path d="M8 0.600v3.400h3.400" fill="#fff" stroke="#111" stroke-width="1"/><path d="M0.600 15.300h10.800V4" fill="none" stroke="#111" stroke-width="1.500"/><path d="M2.500 3.500h4M2.500 5.500h5M2.500 7.500h5M2.500 12.500h6" stroke="#b0b0b0" stroke-width=".9"/><path d="M5 8.700h7V6.500l4.300 3.900L12 14.300V12H5z" fill="#0a14f0"/></svg>
<div class="abs" style="left:317px;top:74px;width:649px;height:32px;background:#f0f0f0"></div>
<div class="tb dis" style="left:319px;top:76px;width:27px;height:27px"><svg class="abs" style="left:4px;top:5px" width="17" height="15" viewBox="0 0 17 15"><rect x="0.300" y="0" width="2.700" height="14" fill="#a0a0a0"/><path d="M16 0v14.500L3 7z" fill="#a0a0a0"/></svg></div>
<div class="tb dis" style="left:346px;top:76px;width:27px;height:27px"><svg class="abs" style="left:4px;top:5px" width="17" height="15" viewBox="0 0 17 15"><path d="M14 0v14.500L0.800 7z" fill="#a0a0a0"/></svg></div>
<div class="tb" style="left:373px;top:76px;width:27px;height:27px"><svg class="abs" style="left:4px;top:5px" width="17" height="15" viewBox="0 0 17 15"><path d="M1 0v14.500L14.200 7z" fill="#0c4a8c"/></svg></div>
<div class="tb" style="left:400px;top:76px;width:27px;height:27px"><svg class="abs" style="left:4px;top:5px" width="17" height="15" viewBox="0 0 17 15"><rect x="13" y="0" width="2.800" height="14" fill="#0c4a8c"/><path d="M0 0v14.500L13 7z" fill="#0c4a8c"/></svg></div>
<div class="tb" style="left:435px;top:76px;width:38px;height:27px"><svg class="abs" style="left:3px;top:4px" width="18" height="17" viewBox="0 0 18 17"><path d="M0.500 0.500h6.700l3.300 3.300v11.100H0.500z" fill="#fff" stroke="#222" stroke-width="1"/><path d="M7.200 0.600v3.300h3.300" fill="#fff" stroke="#111" stroke-width="1"/><path d="M0.600 15h9.900V4" fill="none" stroke="#111" stroke-width="1.400"/><path d="M2.500 3.500h3M2.500 5.500h5M2.500 7.500h5M2.500 12.500h5" stroke="#b0b0b0" stroke-width=".9"/><path d="M5 8.700h7V6.300l4.600 4.200L12 14.700V12.300H5z" fill="#0a14f0"/></svg><svg class="abs" style="left:25px;top:11px" width="5" height="3" viewBox="0 0 5 3"><path d="M0 0h5l-2.500 3z" fill="#000"/></svg></div>
<div class="tb" style="left:473px;top:76px;width:27px;height:27px"><svg class="abs" style="left:4px;top:4px" width="17" height="17" viewBox="0 0 17 17"><path d="M0.600 0.600h6l3 3v8.500h-9z" fill="#fff" stroke="#111" stroke-width="1.100"/><path d="M6.600 0.600v3h3" fill="none" stroke="#111"/><path d="M2.500 4.500h3M2.500 6.500h2.500M2.500 8.500h2.500" stroke="#b0b0b0" stroke-width=".9"/><path d="M5.600 4.400h6l3 3V16H5.600z" fill="#ffffa0" stroke="#111" stroke-width="1.100"/><path d="M11.600 4.400v3h3" fill="#fff" stroke="#111"/><path d="M5.600 16.100h9.100V7.500" fill="none" stroke="#111" stroke-width="1.400"/><path d="M7.500 9.500h5.500M7.500 11.500h5.500M7.500 13.500h5.500M9.300 8v7M11.300 8.500v6.500" stroke="#c8b400" stroke-width=".8"/></svg></div>
<div class="tb" style="left:500px;top:76px;width:25px;height:27px"><svg class="abs" style="left:3px;top:5px" width="17" height="15" viewBox="0 0 17 15"><path d="M4.500 0.600h8.500l-1.500 5H3z" fill="#fff" stroke="#111" stroke-width="1.100"/><path d="M5.500 2.200h5.500M5 3.800h5.500" stroke="#999" stroke-width=".7"/><path d="M0.600 8.300l2.400-3h10.500l2.400 2v5l-1.900 1.800H0.600z" fill="#e0e0e0" stroke="#111" stroke-width="1.100"/><path d="M0.600 8.500h13v5.500" fill="none" stroke="#111" stroke-width="1"/><rect x="1.200" y="9.700" width="12" height="1.700" fill="#555"/><rect x="1.200" y="11.400" width="12" height="2" fill="#bcbcbc"/><rect x="7.500" y="9.900" width="3" height="1.200" fill="#f0e000"/><circle cx="14.700" cy="6.500" r=".6" fill="#111"/><circle cx="15.200" cy="8.500" r=".6" fill="#111"/><circle cx="15" cy="10.600" r=".6" fill="#111"/></svg></div>
<div class="tb" style="left:524px;top:76px;width:13px;height:27px"><svg class="abs" style="left:3px;top:11px" width="5" height="3" viewBox="0 0 5 3"><path d="M0 0h5l-2.500 3z" fill="#000"/></svg></div>
<div class="tb" style="left:546px;top:76px;width:48px;height:27px"><div class="st" style="left:3px;top:6px;font-size:11px;letter-spacing:-0.050px">100%</div><svg class="abs" style="left:35px;top:11px" width="5" height="3" viewBox="0 0 5 3"><path d="M0 0h5l-2.500 3z" fill="#000"/></svg></div>
<div class="tb" style="left:594px;top:76px;width:27px;height:27px"><svg class="abs" style="left:6px;top:5px" width="12" height="15" viewBox="0 0 12 15"><path d="M0.500 0.500h7l3.500 3.500v10.500H0.500z" fill="#fff" stroke="#8a8a8a" stroke-dasharray="1 1"/><path d="M7.500 0.500v3.500h3.500" fill="none" stroke="#8a8a8a"/></svg></div>
<div class="tb" style="left:621px;top:76px;width:27px;height:27px"><svg class="abs" style="left:7px;top:7px" width="10" height="12" viewBox="0 0 10 12"><rect x="3.300" y="0" width="3" height="2.600" fill="#000"/><path d="M1.300 4h5v5.800h2.500V11.800H0.500V9.800H3.300V6H1.300z" fill="#000"/><path d="M0.500 11.600h8.300" stroke="#a000a0" stroke-width=".5"/></svg></div>
<div class="tb" style="left:648px;top:76px;width:27px;height:27px"><svg class="abs" style="left:6px;top:6px" width="13" height="12" viewBox="0 0 12 11"><path d="M2.400 0h2.400v2.200H2.400zM7.200 0h2.400v2.200H7.200zM1.800 2.200h3.600l.6 1.800V11H0V7zM6.600 2.200h3.600L12 7v4H6V4z" fill="#000"/><rect x="4.800" y="3.800" width="2.400" height="2.800" fill="#000"/><rect x="5" y="7.500" width="2" height="3.500" fill="#f0f0f0"/><rect x="3" y="0.800" width="0.800" height="0.800" fill="#fff"/><rect x="8" y="0.800" width="0.800" height="0.800" fill="#fff"/></svg></div>
<div class="tb" style="left:683px;top:76px;width:27px;height:27px"><svg class="abs" style="left:6px;top:4px" width="13" height="17" viewBox="0 0 13 17"><path d="M0.600 0.600h7.400l3.500 3.500v11.800H0.600z" fill="#fff" stroke="#111" stroke-width="1.100"/><path d="M8 0.600v3.500h3.500" fill="none" stroke="#111"/><path d="M0.600 16h10.900V4.500" fill="none" stroke="#111" stroke-width="1.400"/><path d="M2.500 3.500h3.500M2.500 5.500h3.500M2.500 7.500h2" stroke="#b0b0b0" stroke-width=".8"/><path d="M5.800 2.500v11.500M2 10.800h8" stroke="#111" stroke-width="1"/><path d="M1.600 10.800l2-1.800v3.600zM10.200 10.800l-2-1.800v3.600z" fill="#111"/></svg></div>
<div class="tb" style="left:718px;top:76px;width:27px;height:27px"><div class="abs" style="left:0;top:3px;width:25px;text-align:center;font-weight:bold;font-size:16px;line-height:19px;color:#0a64c8;-webkit-text-stroke:0.900px #0a64c8">?</div></div>
<div class="abs" style="left:316px;top:105px;width:660px;height:583px;background:#a0a0a0"></div>
<div class="abs" style="left:317px;top:107px;width:660px;height:581px;background:#646464"></div>
<div class="abs" style="left:318px;top:108px;width:660px;height:563px;background:#fff"></div>
<div class="abs" style="left:327px;top:146px;font-weight:bold;font-size:12px;letter-spacing:-0.34px;line-height:14px">Legend:</div>
<div class="abs" style="left:404px;top:120px;width:38px;height:16px;background:#ffc000;border:1px solid #d8d8d0"></div>
<div class="abs" style="left:404px;top:139px;width:38px;height:16px;background:#7b3f00;border:1px solid #d8d8d0"></div>
<div class="abs" style="left:602px;top:120px;width:38px;height:16px;background:#00d8d0;border:1px solid #d8d8d0"></div>
<div class="abs" style="left:602px;top:139px;width:38px;height:16px;background:#009078;border:1px solid #d8d8d0"></div>
<div class="abs" style="left:404px;top:164px;width:38px;height:16px;border:1px solid #3c96f0;background:#fff;color:#3c96f0;font-size:10.67px;letter-spacing:-0.34px;line-height:14px;padding-left:3px">Client</div>
<div class="abs" style="left:734px;top:164px;width:38px;height:16px;border:1px solid #3c96f0;background:#f0c8c8;color:#6090f0;font-size:10.67px;letter-spacing:-0.34px;line-height:14px;padding-left:3px">Client</div>
<div class="abs" style="left:452px;top:120px;font-size:10.67px;letter-spacing:-0.21px;line-height:14px;white-space:nowrap">Minimum payment date</div>
<div class="abs" style="left:452px;top:139px;font-size:10.67px;letter-spacing:-0.156px;line-height:14px;white-space:nowrap">Maximum payment date</div>
<div class="abs" style="left:650px;top:120px;font-size:10.67px;letter-spacing:-0.2px;line-height:14px;white-space:nowrap">Minimum payment sum</div>
<div class="abs" style="left:650px;top:139px;font-size:10.67px;letter-spacing:-0.16px;line-height:14px;white-space:nowrap">Maximum payment sum</div>
<div class="abs" style="left:452px;top:164px;font-size:10.67px;letter-spacing:0.036px;line-height:14px;white-space:nowrap">Client with payment sum greater or equal to 1000</div>
<div class="abs" style="left:782px;top:164px;font-size:10.67px;letter-spacing:-0.06px;line-height:14px;white-space:nowrap">Client with maximum payment sum</div>
<div class="abs" style="left:322px;top:190px;width:630px;height:1px;background:#c8c8c8"></div>
<div class="rh" style="left:403px;width:97px">Payment Date</div>
<div class="rh" style="left:501px;width:85px">Country</div>
<div class="rh" style="left:587px;width:86px">City</div>
<div class="rh" style="left:674px;width:139px">Customer Name</div>
<div class="rh" style="left:814px;width:96px">Payment Sum</div>
<div class="rc" style="left:403px;top:213px;width:97px;background:#ffc000;border-color:#c8c0a0;padding-left:2px">07.02.2017</div>
<div class="rc" style="left:501px;top:213px;width:85px;background:#fff;border-color:#d0d0c4;color:#000;padding-left:2px">United States</div>
<div class="rc" style="left:587px;top:213px;width:86px;background:#fff;border-color:#d0d0c4;color:#000;padding-left:2px">Portland</div>
<div class="rc" style="left:674px;top:213px;width:139px;background:#fff;border-color:#d0d0c4;color:#000;padding-left:2px">Sandra Bush</div>
<div class="rc" style="left:814px;top:213px;width:96px;background:#00b8a8;border-color:#b8c8b8;color:#000;font-weight:bold;text-align:right;padding-right:2px">300</div>
<div class="rc" style="left:403px;top:235px;width:97px;background:#ffc000;border-color:#3c96f0;padding-left:2px">08.02.2017</div>
<div class="rc" style="left:501px;top:235px;width:85px;background:#fff;border-color:#3c96f0;color:#6a9af4;padding-left:2px">Poland</div>
<div class="rc" style="left:587px;top:235px;width:86px;background:#fff;border-color:#3c96f0;color:#6a9af4;padding-left:2px">Krakow</div>
<div class="rc" style="left:674px;top:235px;width:139px;background:#fff;border-color:#3c96f0;color:#6a9af4;padding-left:2px">Marek Przybylsky</div>
<div class="rc" style="left:814px;top:235px;width:96px;background:#009985;border-color:#3c96f0;color:#fff;font-weight:bold;text-align:right;padding-right:2px">3467,35</div>
<div class="rc" style="left:403px;top:257px;width:97px;background:#fabb00;border-color:#c8c0a0;padding-left:2px">20.03.2017</div>
<div class="rc" style="left:501px;top:257px;width:85px;background:#fff;border-color:#d0d0c4;color:#000;padding-left:2px">Ukraine</div>
<div class="rc" style="left:587px;top:257px;width:86px;background:#fff;border-color:#d0d0c4;color:#000;padding-left:2px">Kyiv</div>
<div class="rc" style="left:674px;top:257px;width:139px;background:#fff;border-color:#d0d0c4;color:#000;padding-left:2px">Bogdan Vovchenko</div>
<div class="rc" style="left:814px;top:257px;width:96px;background:#00bcae;border-color:#b8c8b8;color:#000;font-weight:bold;text-align:right;padding-right:2px">250,50</div>
<div class="rc" style="left:403px;top:279px;width:97px;background:#fabb00;border-color:#c8c0a0;padding-left:2px">20.03.2017</div>
<div class="rc" style="left:501px;top:279px;width:85px;background:#fff;border-color:#d0d0c4;color:#000;padding-left:2px">United States</div>
<div class="rc" style="left:587px;top:279px;width:86px;background:#fff;border-color:#d0d0c4;color:#000;padding-left:2px">Bedford</div>
<div class="rc" style="left:674px;top:279px;width:139px;background:#fff;border-color:#d0d0c4;color:#000;padding-left:2px">John Hladni</div>
<div class="rc" style="left:814px;top:279px;width:96px;background:#00d8d0;border-color:#b8c8b8;color:#000;font-weight:bold;text-align:right;padding-right:2px">21,89</div>
<div class="rc" style="left:403px;top:301px;width:97px;background:#f5b600;border-color:#c8c0a0;padding-left:2px">26.04.2017</div>
<div class="rc" style="left:501px;top:301px;width:85px;background:#fff;border-color:#d0d0c4;color:#000;padding-left:2px">Germany</div>
<div class="rc" style="left:587px;top:301px;width:86px;background:#fff;border-color:#d0d0c4;color:#000;padding-left:2px">Hamburg</div>
<div class="rc" style="left:674px;top:301px;width:139px;background:#fff;border-color:#d0d0c4;color:#000;padding-left:2px">Paul Vogel</div>
<div class="rc" style="left:814px;top:301px;width:96px;background:#00c8bc;border-color:#b8c8b8;color:#000;font-weight:bold;text-align:right;padding-right:2px">121</div>
<div class="rc" style="left:403px;top:323px;width:97px;background:#f4b500;border-color:#c8c0a0;padding-left:2px">02.05.2017</div>
<div class="rc" style="left:501px;top:323px;width:85px;background:#fff;border-color:#d0d0c4;color:#000;padding-left:2px">Canada</div>
<div class="rc" style="left:587px;top:323px;width:86px;background:#fff;border-color:#d0d0c4;color:#000;padding-left:2px">Edmonton</div>
<div class="rc" style="left:674px;top:323px;width:139px;background:#fff;border-color:#d0d0c4;color:#000;padding-left:2px">Eric Miles</div>
<div class="rc" style="left:814px;top:323px;width:96px;background:#00d8d0;border-color:#b8c8b8;color:#000;font-weight:bold;text-align:right;padding-right:2px">19</div>
<div class="rc" style="left:403px;top:345px;width:97px;background:#f4b500;border-color:#3c96f0;padding-left:2px">04.05.2017</div>
<div class="rc" style="left:501px;top:345px;width:85px;background:#fff;border-color:#3c96f0;color:#6a9af4;padding-left:2px">Germany</div>
<div class="rc" style="left:587px;top:345px;width:86px;background:#fff;border-color:#3c96f0;color:#6a9af4;padding-left:2px">Hamburg</div>
<div class="rc" style="left:674px;top:345px;width:139px;background:#fff;border-color:#3c96f0;color:#6a9af4;padding-left:2px">Berndt Mann</div>
<div class="rc" style="left:814px;top:345px;width:96px;background:#00a090;border-color:#3c96f0;color:#fff;font-weight:bold;text-align:right;padding-right:2px">1456</div>
<div class="rc" style="left:403px;top:367px;width:97px;background:#f4b500;border-color:#c8c0a0;padding-left:2px">06.05.2017</div>
<div class="rc" style="left:501px;top:367px;width:85px;background:#fff;border-color:#d0d0c4;color:#000;padding-left:2px">Poland</div>
<div class="rc" style="left:587px;top:367px;width:86px;background:#fff;border-color:#d0d0c4;color:#000;padding-left:2px">Krakow</div>
<div class="rc" style="left:674px;top:367px;width:139px;background:#fff;border-color:#d0d0c4;color:#000;padding-left:2px">Marek Przybylsky</div>
<div class="rc" style="left:814px;top:367px;width:96px;background:#00ad9c;border-color:#b8c8b8;color:#000;font-weight:bold;text-align:right;padding-right:2px">690,04</div>
<div class="rc" style="left:403px;top:389px;width:97px;background:#e6a700;border-color:#c8c0a0;padding-left:2px">22.08.2017</div>
<div class="rc" style="left:501px;top:389px;width:85px;background:#fff;border-color:#d0d0c4;color:#000;padding-left:2px">Germany</div>
<div class="rc" style="left:587px;top:389px;width:86px;background:#fff;border-color:#d0d0c4;color:#000;padding-left:2px">Berlin</div>
<div class="rc" style="left:674px;top:389px;width:139px;background:#fff;border-color:#d0d0c4;color:#000;padding-left:2px">Andreas Muller</div>
<div class="rc" style="left:814px;top:389px;width:96px;background:#00b4a4;border-color:#b8c8b8;color:#000;font-weight:bold;text-align:right;padding-right:2px">450</div>
<div class="rc" style="left:403px;top:411px;width:97px;background:#e2a300;border-color:#c8c0a0;padding-left:2px">25.09.2017</div>
<div class="rc" style="left:501px;top:411px;width:85px;background:#fff;border-color:#d0d0c4;color:#000;padding-left:2px">Denmark</div>
<div class="rc" style="left:587px;top:411px;width:86px;background:#fff;border-color:#d0d0c4;color:#000;padding-left:2px">Copenhagen</div>
<div class="rc" style="left:674px;top:411px;width:139px;background:#fff;border-color:#d0d0c4;color:#000;padding-left:2px">Hans Petersen</div>
<div class="rc" style="left:814px;top:411px;width:96px;background:#00c8bc;border-color:#b8c8b8;color:#000;font-weight:bold;text-align:right;padding-right:2px">125,33</div>
<div class="rc" style="left:403px;top:433px;width:97px;background:#e0a200;border-color:#3c96f0;padding-left:2px">06.10.2017</div>
<div class="rc" style="left:501px;top:433px;width:85px;background:#fff;border-color:#3c96f0;color:#6a9af4;padding-left:2px">France</div>
<div class="rc" style="left:587px;top:433px;width:86px;background:#fff;border-color:#3c96f0;color:#6a9af4;padding-left:2px">Paris</div>
<div class="rc" style="left:674px;top:433px;width:139px;background:#fff;border-color:#3c96f0;color:#6a9af4;padding-left:2px">Jean-Paul Papin</div>
<div class="rc" style="left:814px;top:433px;width:96px;background:#009680;border-color:#3c96f0;color:#fff;font-weight:bold;text-align:right;padding-right:2px">4563,50</div>
<div class="rc" style="left:403px;top:455px;width:97px;background:#db9d00;border-color:#c8c0a0;padding-left:2px">15.11.2017</div>
<div class="rc" style="left:501px;top:455px;width:85px;background:#fff;border-color:#d0d0c4;color:#000;padding-left:2px">Moldova</div>
<div class="rc" style="left:587px;top:455px;width:86px;background:#fff;border-color:#d0d0c4;color:#000;padding-left:2px">Kishinev</div>
<div class="rc" style="left:674px;top:455px;width:139px;background:#fff;border-color:#d0d0c4;color:#000;padding-left:2px">Ion Rotaru</div>
<div class="rc" style="left:814px;top:455px;width:96px;background:#00b0a0;border-color:#b8c8b8;color:#000;font-weight:bold;text-align:right;padding-right:2px">555,09</div>
<div class="rc" style="left:403px;top:477px;width:97px;background:#d89a00;border-color:#c8c0a0;padding-left:2px">09.12.2017</div>
<div class="rc" style="left:501px;top:477px;width:85px;background:#fff;border-color:#d0d0c4;color:#000;padding-left:2px">Austria</div>
<div class="rc" style="left:587px;top:477px;width:86px;background:#fff;border-color:#d0d0c4;color:#000;padding-left:2px">Vienna</div>
<div class="rc" style="left:674px;top:477px;width:139px;background:#fff;border-color:#d0d0c4;color:#000;padding-left:2px">Rita Hagen</div>
<div class="rc" style="left:814px;top:477px;width:96px;background:#00a694;border-color:#b8c8b8;color:#000;font-weight:bold;text-align:right;padding-right:2px">989,08</div>
<div class="rc" style="left:403px;top:499px;width:97px;background:#d79900;border-color:#c8c0a0;padding-left:2px">16.12.2017</div>
<div class="rc" style="left:501px;top:499px;width:85px;background:#fff;border-color:#d0d0c4;color:#000;padding-left:2px">United States</div>
<div class="rc" style="left:587px;top:499px;width:86px;background:#fff;border-color:#d0d0c4;color:#000;padding-left:2px">Miami</div>
<div class="rc" style="left:674px;top:499px;width:139px;background:#fff;border-color:#d0d0c4;color:#000;padding-left:2px">Rick Yonley</div>
<div class="rc" style="left:814px;top:499px;width:96px;background:#00a897;border-color:#b8c8b8;color:#000;font-weight:bold;text-align:right;padding-right:2px">876,90</div>
<div class="rc" style="left:403px;top:521px;width:97px;background:#d79900;border-color:#c8c0a0;padding-left:2px">17.12.2017</div>
<div class="rc" style="left:501px;top:521px;width:85px;background:#fff;border-color:#d0d0c4;color:#000;padding-left:2px">Germany</div>
<div class="rc" style="left:587px;top:521px;width:86px;background:#fff;border-color:#d0d0c4;color:#000;padding-left:2px">Berlin</div>
<div class="rc" style="left:674px;top:521px;width:139px;background:#fff;border-color:#d0d0c4;color:#000;padding-left:2px">Andreas Muller</div>
<div class="rc" style="left:814px;top:521px;width:96px;background:#00d0c6;border-color:#b8c8b8;color:#000;font-weight:bold;text-align:right;padding-right:2px">54</div>
<div class="rc" style="left:403px;top:543px;width:97px;background:#d49600;border-color:#c8c0a0;padding-left:2px">06.01.2018</div>
<div class="rc" style="left:501px;top:543px;width:85px;background:#fff;border-color:#d0d0c4;color:#000;padding-left:2px">Austria</div>
<div class="rc" style="left:587px;top:543px;width:86px;background:#fff;border-color:#d0d0c4;color:#000;padding-left:2px">Vienna</div>
<div class="rc" style="left:674px;top:543px;width:139px;background:#fff;border-color:#d0d0c4;color:#000;padding-left:2px">Rita Hagen</div>
<div class="rc" style="left:814px;top:543px;width:96px;background:#00c6ba;border-color:#b8c8b8;color:#000;font-weight:bold;text-align:right;padding-right:2px">129,24</div>
<div class="rc" style="left:403px;top:565px;width:97px;background:#d49600;border-color:#c8c0a0;padding-left:2px">11.01.2018</div>
<div class="rc" style="left:501px;top:565px;width:85px;background:#fff;border-color:#d0d0c4;color:#000;padding-left:2px">United States</div>
<div class="rc" style="left:587px;top:565px;width:86px;background:#fff;border-color:#d0d0c4;color:#000;padding-left:2px">Portland</div>
<div class="rc" style="left:674px;top:565px;width:139px;background:#fff;border-color:#d0d0c4;color:#000;padding-left:2px">Sandra Bush</div>
<div class="rc" style="left:814px;top:565px;width:96px;background:#00beb0;border-color:#b8c8b8;color:#000;font-weight:bold;text-align:right;padding-right:2px">221,99</div>
<div class="rc" style="left:403px;top:587px;width:97px;background:#d49600;border-color:#c8c0a0;padding-left:2px">12.01.2018</div>
<div class="rc" style="left:501px;top:587px;width:85px;background:#fff;border-color:#d0d0c4;color:#000;padding-left:2px">Israel</div>
<div class="rc" style="left:587px;top:587px;width:86px;background:#fff;border-color:#d0d0c4;color:#000;padding-left:2px">Tel Aviv</div>
<div class="rc" style="left:674px;top:587px;width:139px;background:#fff;border-color:#d0d0c4;color:#000;padding-left:2px">Shimon Rabinovich</div>
<div class="rc" style="left:814px;top:587px;width:96px;background:#00aa99;border-color:#b8c8b8;color:#000;font-weight:bold;text-align:right;padding-right:2px">789,89</div>
<div class="rc" style="left:403px;top:609px;width:97px;background:#cf9100;border-color:#c8c0a0;padding-left:2px">16.02.2018</div>
<div class="rc" style="left:501px;top:609px;width:85px;background:#fff;border-color:#d0d0c4;color:#000;padding-left:2px">Germany</div>
<div class="rc" style="left:587px;top:609px;width:86px;background:#fff;border-color:#d0d0c4;color:#000;padding-left:2px">Hamburg</div>
<div class="rc" style="left:674px;top:609px;width:139px;background:#fff;border-color:#d0d0c4;color:#000;padding-left:2px">Paul Vogel</div>
<div class="rc" style="left:814px;top:609px;width:96px;background:#00b2a2;border-color:#b8c8b8;color:#000;font-weight:bold;text-align:right;padding-right:2px">510</div>
<div class="rc" style="left:403px;top:631px;width:97px;background:#ce9000;border-color:#c8c0a0;padding-left:2px">22.02.2018</div>
<div class="rc" style="left:501px;top:631px;width:85px;background:#fff;border-color:#d0d0c4;color:#000;padding-left:2px">Belgium</div>
<div class="rc" style="left:587px;top:631px;width:86px;background:#fff;border-color:#d0d0c4;color:#000;padding-left:2px">Liege</div>
<div class="rc" style="left:674px;top:631px;width:139px;background:#fff;border-color:#d0d0c4;color:#000;padding-left:2px">Mehmed Rabbani</div>
<div class="rc" style="left:814px;top:631px;width:96px;background:#00ac9b;border-color:#b8c8b8;color:#000;font-weight:bold;text-align:right;padding-right:2px">709,10</div>
<div class="rc" style="left:403px;top:653px;width:97px;background:#ce9000;border-color:#3c96f0;padding-left:2px">25.02.2018</div>
<div class="rc" style="left:501px;top:653px;width:85px;background:#f3caca;border-color:#3c96f0;color:#6a9af4;padding-left:2px">Italy</div>
<div class="rc" style="left:587px;top:653px;width:86px;background:#f3caca;border-color:#3c96f0;color:#6a9af4;padding-left:2px">Naples</div>
<div class="rc" style="left:674px;top:653px;width:139px;background:#f3caca;border-color:#3c96f0;color:#6a9af4;padding-left:2px">Antonio Lippi</div>
<div class="rc" style="left:814px;top:653px;width:96px;background:#009078;border-color:#3c96f0;color:#fff;font-weight:bold;text-align:right;padding-right:2px">7902,40</div>
<div class="abs" style="left:953px;top:108px;width:13px;height:563px;background:#f0f0f0"></div>
<div class="abs" style="left:953px;top:142px;width:13px;height:265px;background:#cdcdcd"></div>
<svg class="abs" style="left:956px;top:113px" width="9" height="7" viewBox="0 0 9 7"><path d="M1 5.800L4.500 2.200L8 5.800" fill="none" stroke="#505050" stroke-width="2"/></svg>
<svg class="abs" style="left:956px;top:659px" width="9" height="7" viewBox="0 0 9 7"><path d="M1 1.200L4.500 4.800L8 1.200" fill="none" stroke="#505050" stroke-width="2"/></svg>
<div class="abs" style="left:318px;top:671px;width:648px;height:17px;background:#f0f0f0"></div>
<div class="abs" style="left:366px;top:672px;width:479px;height:15px;background:#cdcdcd"></div>
<svg class="abs" style="left:322px;top:675px" width="7" height="9" viewBox="0 0 7 9"><path d="M5.800 1L2.200 4.500L5.800 8" fill="none" stroke="#505050" stroke-width="2"/></svg>
<svg class="abs" style="left:940px;top:675px" width="7" height="9" viewBox="0 0 7 9"><path d="M1.200 1L4.800 4.500L1.200 8" fill="none" stroke="#505050" stroke-width="2"/></svg>
<div class="abs" style="left:314px;top:688px;width:652px;height:25px;background:#f0f0f0"></div>
<div class="abs" style="left:316px;top:688px;width:650px;height:1px;background:#fdfdfd"></div>
<div class="abs" style="left:316px;top:689px;width:650px;height:1px;background:#e0e0e0"></div>
<div class="abs" style="left:881px;top:688px;font-size:19.500px;line-height:24px;color:#e2e2e2;white-space:nowrap;letter-spacing:0.100px">filepuma</div>
<div class="st" style="left:318.500px;top:694px;font-size:12px;letter-spacing:0.010px">Use Ctrl + mouse wheel to zoom in/out</div>
<div class="st" style="left:647px;top:694px;font-size:12px;letter-spacing:-0.600px">0:00:00</div>
<div class="st" style="left:697px;top:694px;font-size:12px;letter-spacing:-0.360px">Page 1 of 2</div>
<div class="st" style="left:860px;top:694px;font-size:12px;letter-spacing:-0.100px">0 warning(s)</div>
<div class="abs" style="left:692px;top:692px;width:1px;height:16px;background:#d4d4d4"></div>
<div class="abs" style="left:855px;top:692px;width:1px;height:16px;background:#d4d4d4"></div>
<div class="abs" style="left:314px;top:709px;width:652px;height:2px;background:#fff"></div>
<div class="abs" style="left:312px;top:712px;width:654px;height:1px;background:#a8a8a8"></div>
</div></body></html>
